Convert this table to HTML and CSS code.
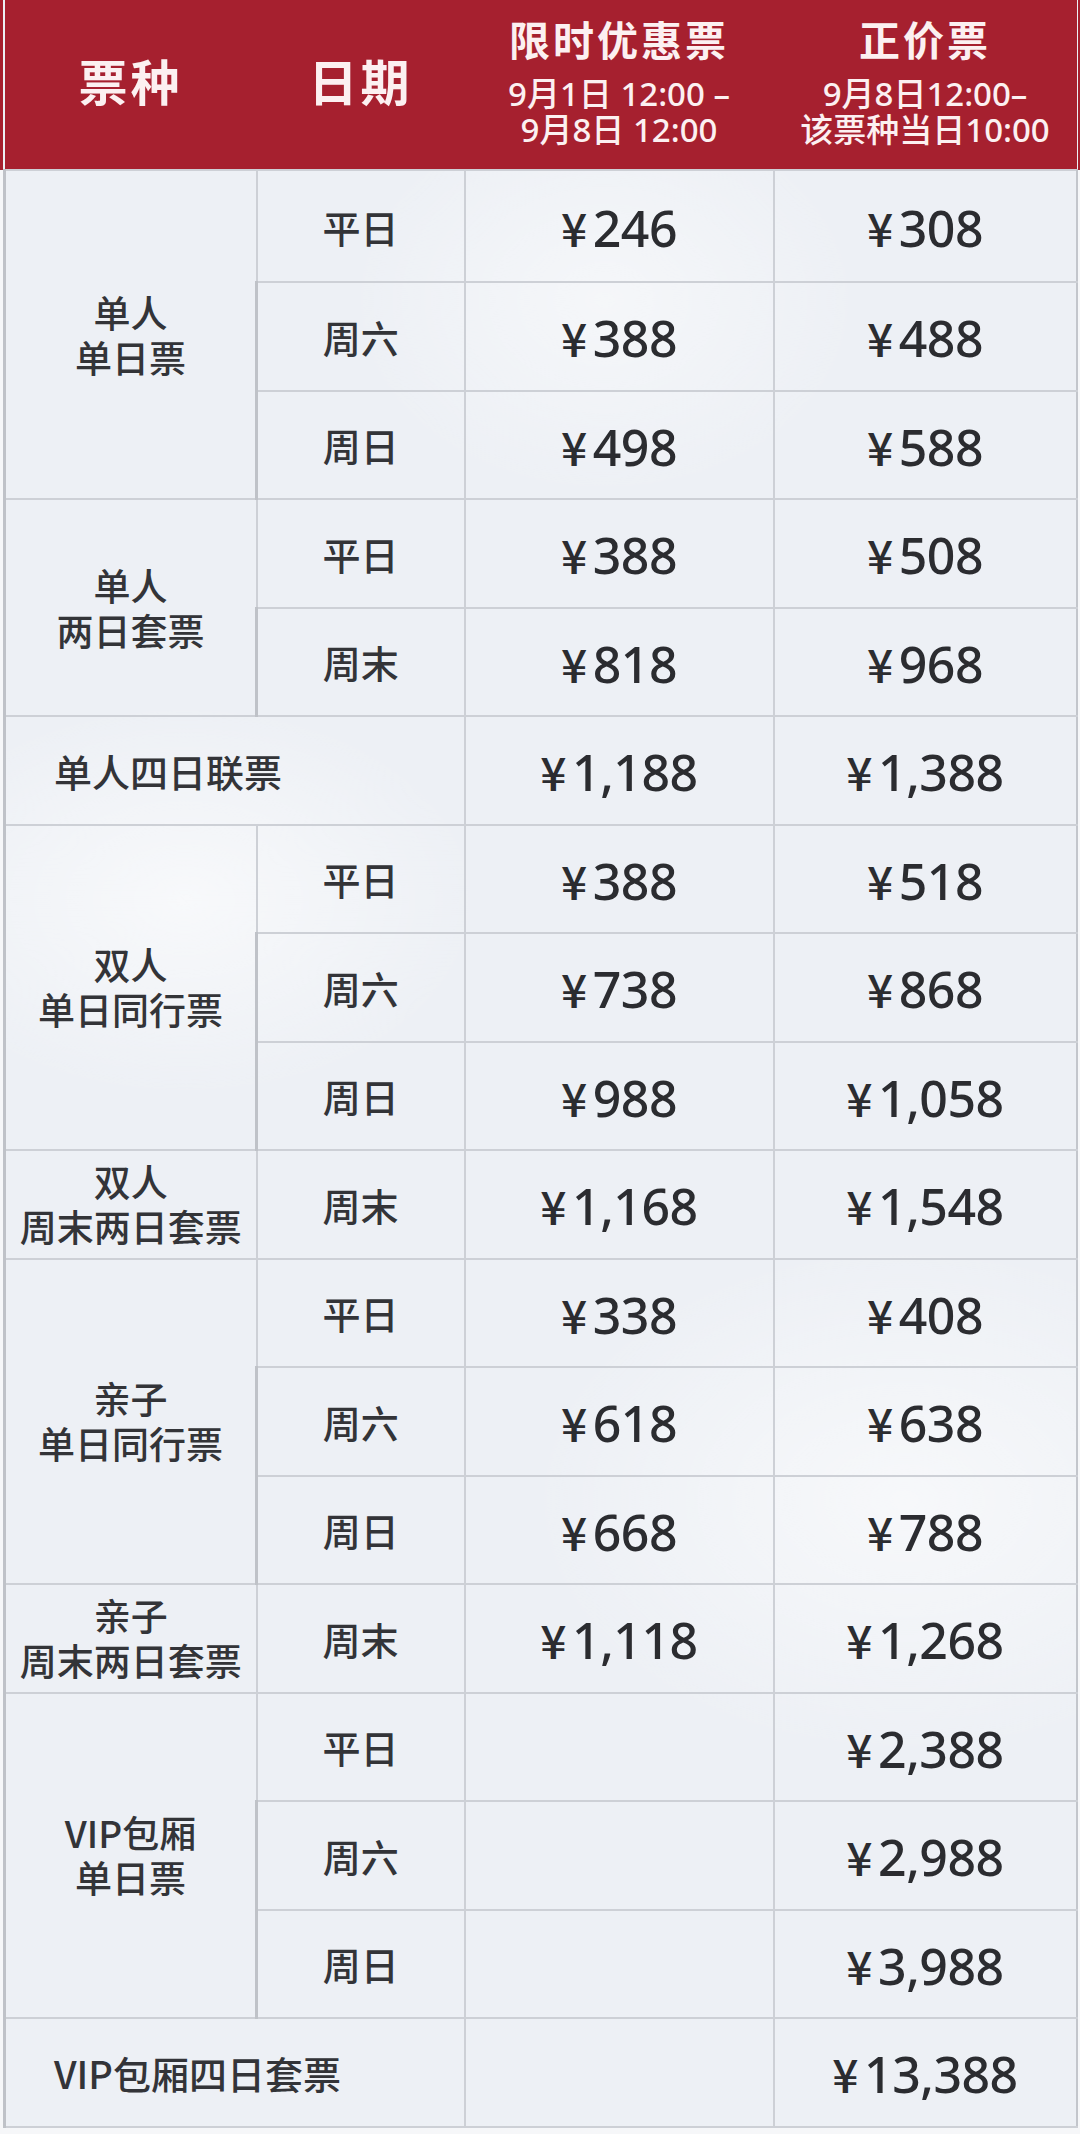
FILE: index.html
```html
<!DOCTYPE html>
<html lang="zh-CN">
<head>
<meta charset="utf-8">
<title>票价表</title>
<link rel="stylesheet" href="styles.css">
</head>
<body>
<div class="page">
<table class="prices">
  <colgroup>
    <col class="c-type">
    <col class="c-date">
    <col class="c-promo">
    <col class="c-full">
  </colgroup>
  <thead>
    <tr class="head">
      <th class="h-big">票种</th>
      <th class="h-big">日期</th>
      <th>
        <div class="h-title">限时优惠票</div>
        <div class="h-sub">9月1日 12:00 –<br>9月8日 12:00</div>
      </th>
      <th>
        <div class="h-title">正价票</div>
        <div class="h-sub">9月8日12:00–<br>该票种当日10:00</div>
      </th>
    </tr>
  </thead>
  <tbody>
    <tr class="first"><td class="type" rowspan="3">单人<br>单日票</td><td class="day">平日</td><td class="price"><span class="yen">¥</span>246</td><td class="price"><span class="yen">¥</span>308</td></tr>
    <tr><td class="day">周六</td><td class="price"><span class="yen">¥</span>388</td><td class="price"><span class="yen">¥</span>488</td></tr>
    <tr><td class="day">周日</td><td class="price"><span class="yen">¥</span>498</td><td class="price"><span class="yen">¥</span>588</td></tr>

    <tr><td class="type" rowspan="2">单人<br>两日套票</td><td class="day">平日</td><td class="price"><span class="yen">¥</span>388</td><td class="price"><span class="yen">¥</span>508</td></tr>
    <tr><td class="day">周末</td><td class="price"><span class="yen">¥</span>818</td><td class="price"><span class="yen">¥</span>968</td></tr>

    <tr><td class="type wide" colspan="2">单人四日联票</td><td class="price"><span class="yen">¥</span>1,188</td><td class="price"><span class="yen">¥</span>1,388</td></tr>

    <tr><td class="type" rowspan="3">双人<br>单日同行票</td><td class="day">平日</td><td class="price"><span class="yen">¥</span>388</td><td class="price"><span class="yen">¥</span>518</td></tr>
    <tr><td class="day">周六</td><td class="price"><span class="yen">¥</span>738</td><td class="price"><span class="yen">¥</span>868</td></tr>
    <tr><td class="day">周日</td><td class="price"><span class="yen">¥</span>988</td><td class="price"><span class="yen">¥</span>1,058</td></tr>

    <tr><td class="type">双人<br>周末两日套票</td><td class="day">周末</td><td class="price"><span class="yen">¥</span>1,168</td><td class="price"><span class="yen">¥</span>1,548</td></tr>

    <tr><td class="type" rowspan="3">亲子<br>单日同行票</td><td class="day">平日</td><td class="price"><span class="yen">¥</span>338</td><td class="price"><span class="yen">¥</span>408</td></tr>
    <tr><td class="day">周六</td><td class="price"><span class="yen">¥</span>618</td><td class="price"><span class="yen">¥</span>638</td></tr>
    <tr><td class="day">周日</td><td class="price"><span class="yen">¥</span>668</td><td class="price"><span class="yen">¥</span>788</td></tr>

    <tr><td class="type">亲子<br>周末两日套票</td><td class="day">周末</td><td class="price"><span class="yen">¥</span>1,118</td><td class="price"><span class="yen">¥</span>1,268</td></tr>

    <tr><td class="type" rowspan="3">VIP包厢<br>单日票</td><td class="day">平日</td><td class="price"></td><td class="price"><span class="yen">¥</span>2,388</td></tr>
    <tr><td class="day">周六</td><td class="price"></td><td class="price"><span class="yen">¥</span>2,988</td></tr>
    <tr><td class="day">周日</td><td class="price"></td><td class="price"><span class="yen">¥</span>3,988</td></tr>

    <tr><td class="type wide" colspan="2">VIP包厢四日套票</td><td class="price"></td><td class="price"><span class="yen">¥</span>13,388</td></tr>
  </tbody>
</table>
</div>
</body>
</html>
```

FILE: styles.css
```css
html, body {
  margin: 0;
  padding: 0;
}

body {
  width: 1080px;
  height: 2134px;
  overflow: hidden;
  background: linear-gradient(#a6202f 0, #a6202f 170px, #f6f7f9 170px);
  font-family: "Noto Sans CJK SC", "Noto Sans", sans-serif;
  color: #2e2f33;
}

.page {
  padding-left: 3px;
}

.prices {
  width: 1072px;
  table-layout: fixed;
  border-collapse: collapse;
  background-color: #edf0f5;
  background-image:
    radial-gradient(ellipse 300px 200px at 180px 900px, rgba(255,255,255,0.6), rgba(255,255,255,0)),
    radial-gradient(ellipse 380px 260px at 900px 1500px, rgba(255,255,255,0.55), rgba(255,255,255,0)),
    radial-gradient(ellipse 260px 200px at 600px 300px, rgba(255,255,255,0.45), rgba(255,255,255,0));
}

.c-type { width: 252px; }
.c-date { width: 208px; }
.c-promo { width: 309px; }
.c-full { width: 303px; }

.head {
  height: 170px;
  background: #a6202f;
  color: #fcf0f1;
}

.head th {
  padding: 0 0 8px;
  text-align: center;
  vertical-align: middle;
  border: 0;
}

.head th.h-big {
  font-size: 49px;
  font-weight: 700;
  letter-spacing: 3px;
  padding: 0 0 10px;
}

.h-title {
  font-size: 41px;
  font-weight: 700;
  line-height: 48px;
  letter-spacing: 3px;
  margin-bottom: 14px;
}

.h-sub {
  font-family: "Noto Sans", "Noto Sans CJK SC", sans-serif;
  font-size: 33px;
  font-weight: 500;
  line-height: 36px;
}

tbody tr {
  height: 108.5px;
}

tbody tr.first {
  height: 112px;
}

tbody td {
  padding: 0;
  text-align: center;
  vertical-align: middle;
  border: 2px solid #cdd0d6;
}

tbody td:first-child,
tbody tr td.type {
  border-left: 3px solid #bfc2c8;
}

tbody td.price:last-child {
  border-right: 2px solid #c3c6cc;
}

.type {
  font-size: 37px;
  font-weight: 500;
  line-height: 45px;
  color: #333438;
}

.type.wide {
  text-align: left;
  padding-left: 48px;
  font-size: 38px;
}

.day {
  font-size: 38px;
  font-weight: 500;
  color: #333438;
}

.price {
  font-family: "Noto Sans", "Open Sans", sans-serif;
  font-size: 50px;
  font-weight: 500;
  letter-spacing: -0.5px;
  color: #2b2c30;
  padding-top: 4px;
}

.yen {
  font-family: "Noto Sans CJK SC", sans-serif;
  font-weight: 500;
  font-size: 46px;
  margin-right: 6px;
}
```
